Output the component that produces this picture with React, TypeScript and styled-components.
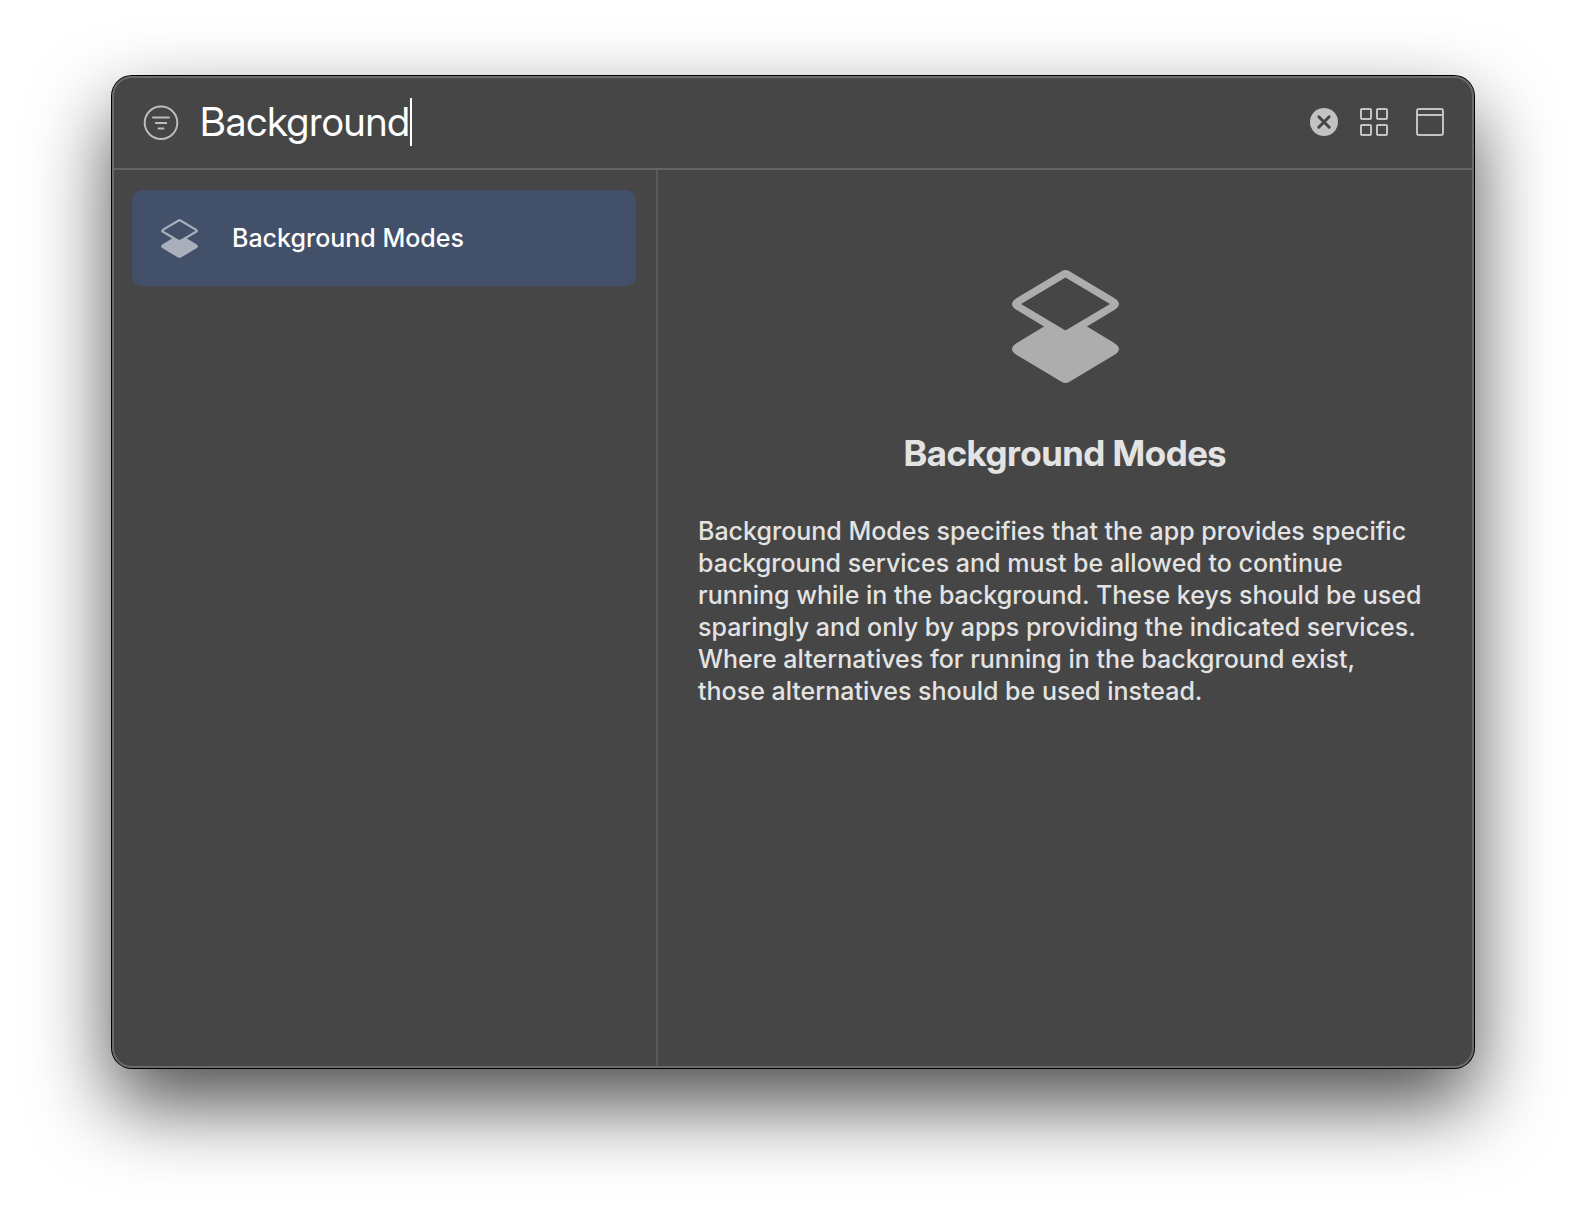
import React, { useState } from "react";
import styled, { createGlobalStyle } from "styled-components";

const GlobalStyle = createGlobalStyle`
  * { box-sizing: border-box; }
  body {
    margin: 0;
    background: #ffffff;
    font-family: Inter, "Liberation Sans", sans-serif;
  }
  button, input { font-family: inherit; }
`;

const displayFont = `"Inter Display", Inter, "Liberation Sans", sans-serif`;

const Desktop = styled.main`
  display: flex;
  min-height: 100vh;
  padding: 76px 112px 148px;
  overflow: hidden;
`;

const LibraryWindow = styled.section`
  flex: 1;
  min-width: 0;
  display: flex;
  flex-direction: column;
  background: #464646;
  border: 2px solid #6b6b6b;
  border-radius: 20px;
  box-shadow: 0 0 0 1px #000000, 0 36px 80px rgba(0, 0, 0, 0.7);
`;

const SearchBar = styled.header`
  display: flex;
  align-items: center;
  height: 92px;
  padding: 0 28px 2px 29px;
  border-bottom: 2px solid #646464;
`;

const SearchField = styled.label`
  flex: 1;
  min-width: 0;
  display: flex;
  align-items: center;
  padding-left: 21px;
`;

const SearchInput = styled.input`
  field-sizing: content;
  min-width: 4px;
  max-width: 100%;
  height: 48px;
  padding: 0 0 2px;
  border: 0;
  outline: 0;
  background: transparent;
  color: #ffffff;
  caret-color: transparent;
  font-family: ${displayFont};
  font-size: 40px;
  font-weight: 400;
`;

const Caret = styled.span`
  flex: none;
  width: 2px;
  height: 48px;
  background: #ffffff;
`;

const IconButton = styled.button<{ $size: number }>`
  display: flex;
  flex: none;
  width: ${(p) => p.$size}px;
  height: ${(p) => p.$size}px;
  padding: 0;
  border: 0;
  background: transparent;
  color: #c2c2c2;
`;

const Tools = styled.div`
  display: flex;
  align-items: center;
  gap: 22px;
`;

const ViewTools = styled.div`
  display: flex;
  gap: 28px;
`;

const Panes = styled.div`
  flex: 1;
  display: grid;
  grid-template-columns: 544px minmax(0, 1fr);
`;

const ResultList = styled.ul`
  margin: 0;
  padding: 20px 20px 20px 18px;
  border-right: 2px solid #5a5a5a;
  list-style: none;
`;

const ResultButton = styled.button`
  display: flex;
  align-items: center;
  gap: 34px;
  width: 100%;
  height: 96px;
  padding: 0 29px;
  border: 0;
  border-radius: 10px;
  background: #435069;
  color: #ffffff;
  font-size: 25px;
  font-weight: 500;
  line-height: 32px;
  text-align: left;
`;

const Detail = styled.article`
  display: flex;
  flex-direction: column;
  align-items: center;
  padding: 100px 40px 40px;
  color: #e3e3e3;
`;

const DetailTitle = styled.h1`
  margin: 48px 0 40px;
  font-family: ${displayFont};
  font-size: 36px;
  font-weight: 700;
  line-height: 44px;
`;

const DetailText = styled.p`
  width: 100%;
  margin: 0;
  padding-right: 8px;
  font-size: 25px;
  font-weight: 500;
  line-height: 32px;
`;

function CapabilityIcon({ width, color, thin }: { width: number; color: string; thin?: boolean }) {
  const inner = thin
    ? "M7 34L53.5 6.3L100 34L53.5 61.7Z"
    : "M9 34L53.5 7.4L98 34L53.5 60.6Z";
  return (
    <svg width={width} height={Math.round((width * 113) / 107)} viewBox="0 0 107 113" fill={color} aria-hidden="true">
      <path
        fillRule="evenodd"
        d={
          "M5.6 27.4L49.5 1.2Q53.5 -1.2 57.5 1.2L101.4 27.4Q112.6 34 101.4 40.6L75 56.5L53.5 69.2L32 56.5L5.6 40.6Q-5.6 34 5.6 27.4Z" +
          inner
        }
      />
      <path d="M5.6 72.4L32 56.5L53.5 60.6L75 56.5L101.4 72.4Q112.6 79 101.4 85.6L57.5 111.8Q53.5 114.2 49.5 111.8L5.6 85.6Q-5.6 79 5.6 72.4Z" />
    </svg>
  );
}

function FilterIcon() {
  return (
    <svg width="36" height="36" viewBox="0 0 36 36" fill="none" stroke="#bcbcbc" strokeWidth="2" strokeLinecap="round">
      <circle cx="18" cy="18.7" r="16.3" />
      <path d="M10 13.5H26M12.8 19H23.2M15.5 24.5H20.5" />
    </svg>
  );
}

function ClearIcon() {
  return (
    <svg width="28" height="28" viewBox="0 0 28 28">
      <circle cx="14" cy="14" r="14" fill="currentColor" />
      <path d="M8.8 8.8L19.2 19.2M19.2 8.8L8.8 19.2" stroke="#464646" strokeWidth="3" strokeLinecap="round" />
    </svg>
  );
}

function GridIcon() {
  return (
    <svg width="28" height="28" viewBox="0 0 28 28" fill="none" stroke="currentColor" strokeWidth="2">
      <rect x="1" y="1" width="10" height="10" rx="1" />
      <rect x="17" y="1" width="10" height="10" rx="1" />
      <rect x="1" y="17" width="10" height="10" rx="1" />
      <rect x="17" y="17" width="10" height="10" rx="1" />
    </svg>
  );
}

function WindowIcon() {
  return (
    <svg width="28" height="28" viewBox="0 0 28 28" fill="none" stroke="currentColor" strokeWidth="2">
      <rect x="1" y="1" width="26" height="26" rx="2" />
      <path d="M1 7H27" />
    </svg>
  );
}

export default function App() {
  const [query, setQuery] = useState("Background");
  return (
    <>
      <GlobalStyle />
      <Desktop>
        <LibraryWindow aria-label="Capabilities library">
          <SearchBar>
            <IconButton type="button" $size={36} aria-label="Filter">
              <FilterIcon />
            </IconButton>
            <SearchField>
              <SearchInput
                type="text"
                aria-label="Search capabilities"
                value={query}
                onChange={(e) => setQuery(e.target.value)}
              />
              <Caret />
            </SearchField>
            <Tools>
              <IconButton type="button" $size={28} aria-label="Clear search" onClick={() => setQuery("")}>
                <ClearIcon />
              </IconButton>
              <ViewTools>
                <IconButton type="button" $size={28} aria-label="Grid view">
                  <GridIcon />
                </IconButton>
                <IconButton type="button" $size={28} aria-label="Show details">
                  <WindowIcon />
                </IconButton>
              </ViewTools>
            </Tools>
          </SearchBar>
          <Panes>
            <ResultList>
              <li>
                <ResultButton type="button" aria-current="true">
                  <CapabilityIcon width={37} color="#a9afbb" thin />
                  Background Modes
                </ResultButton>
              </li>
            </ResultList>
            <Detail>
              <CapabilityIcon width={107} color="#adadad" />
              <DetailTitle>Background Modes</DetailTitle>
              <DetailText>
                Background Modes specifies that the app provides specific background services and must be
                allowed to continue running while in the background. These keys should be used sparingly and
                only by apps providing the indicated services. Where alternatives for running in the
                background exist, those alternatives should be used instead.
              </DetailText>
            </Detail>
          </Panes>
        </LibraryWindow>
      </Desktop>
    </>
  );
}
